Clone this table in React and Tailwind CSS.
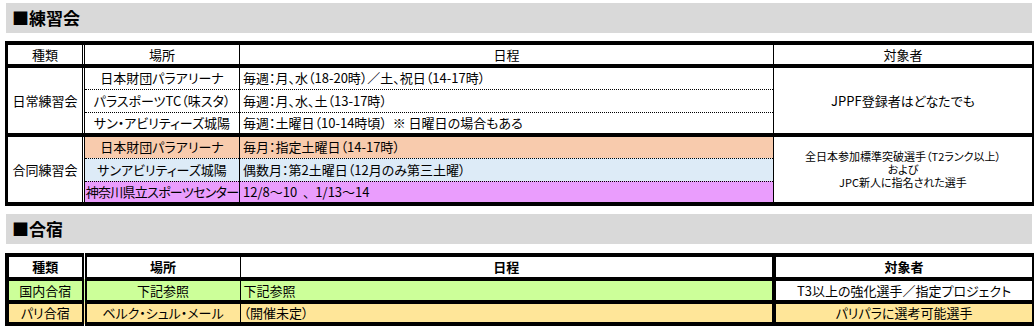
export default function App() {
  return (
    <div className="w-[1035px] h-[328px] bg-white pt-[3px] pl-[5px] text-black font-['Noto_Sans_CJK_JP',sans-serif] [font-feature-settings:'palt']">
      {/* 練習会 */}
      <div className="ml-[1px] w-[1026px] h-[30px] bg-[#d9d9d9] flex items-center pl-[6px] text-[17px] font-bold">■練習会</div>

      <table className="mt-[8px] w-[1029px] table-fixed border-collapse border-t-4 border-b-4 border-l-[3px] border-r-2 border-black text-[13px] leading-[16px]">
        <colgroup>
          <col className="w-[77px]" />
          <col className="w-[156px]" />
          <col className="w-[534px]" />
          <col />
        </colgroup>
        <thead>
          <tr className="h-[23px]">
            <th className="font-normal border-b-4 border-r-[3px] [border-right-style:double] border-black">種類</th>
            <th className="font-normal border-b-4 border-r border-black">場所</th>
            <th className="font-normal border-b-4 border-r border-black">日程</th>
            <th className="font-normal border-b-4 border-black">対象者</th>
          </tr>
        </thead>
        <tbody>
          <tr className="h-[23px]">
            <td rowSpan={3} className="text-center border-r-[3px] [border-right-style:double] border-black">日常練習会</td>
            <td className="text-center border-r border-b border-black [border-bottom-style:dotted]">日本財団パラアリーナ</td>
            <td className="pl-[3px] border-r border-b border-black [border-bottom-style:dotted]">毎週：月、水（18-20時）／土、祝日（14-17時）</td>
            <td rowSpan={3} className="text-center">JPPF登録者はどなたでも</td>
          </tr>
          <tr className="h-[23px]">
            <td className="text-center border-r border-b border-black [border-bottom-style:dotted]">パラスポーツTC（味スタ）</td>
            <td className="pl-[3px] border-r border-b border-black [border-bottom-style:dotted]">毎週：月、水、土（13-17時）</td>
          </tr>
          <tr className="h-[23px]">
            <td className="text-center border-r border-black">サン・アビリティーズ城陽</td>
            <td className="pl-[3px] border-r border-black whitespace-pre">毎週：土曜日（10-14時頃）  ※ 日曜日の場合もある</td>
          </tr>
          <tr className="h-[23px]">
            <td rowSpan={3} className="text-center border-t-4 border-r-[3px] [border-right-style:double] border-black">合同練習会</td>
            <td className="text-center bg-[#f8cbad] border-t-4 border-r border-b border-black [border-bottom-style:dotted]">日本財団パラアリーナ</td>
            <td className="pl-[3px] bg-[#f8cbad] border-t-4 border-r border-b border-black [border-bottom-style:dotted]">毎月：指定土曜日（14-17時）</td>
            <td rowSpan={3} className="text-center text-[11px] leading-[13px] border-t-4 border-black">
              <div>全日本参加標準突破選手（T2ランク以上）</div>
              <div>および</div>
              <div>JPC新人に指名された選手</div>
            </td>
          </tr>
          <tr className="h-[23px]">
            <td className="text-center bg-[#ddebf7] border-r border-b border-black [border-bottom-style:dotted]">サンアビリティーズ城陽</td>
            <td className="pl-[3px] bg-[#ddebf7] border-r border-b border-black [border-bottom-style:dotted]">偶数月：第2土曜日（12月のみ第三土曜）</td>
          </tr>
          <tr className="h-[23px]">
            <td className="px-0 text-center tracking-[-0.7px] bg-[#ea9dfd] border-r border-black whitespace-nowrap">神奈川県立スポーツセンター</td>
            <td className="pl-[3px] bg-[#ea9dfd] border-r border-black whitespace-pre">12/8～10  、  1/13～14</td>
          </tr>
        </tbody>
      </table>

      {/* 合宿 */}
      <div className="mt-[8px] ml-[1px] w-[1026px] h-[30px] bg-[#d9d9d9] flex items-center pl-[6px] text-[17px] font-bold">■合宿</div>

      <table className="mt-[9px] w-[1029px] table-fixed border-collapse border-4 border-r-2 border-black text-[13px] leading-[16px]">
        <colgroup>
          <col className="w-[77px]" />
          <col className="w-[156px]" />
          <col className="w-[534px]" />
          <col />
        </colgroup>
        <thead>
          <tr className="h-[24px]">
            <th className="font-bold border-b-4 border-r-[5px] [border-right-style:double] border-black">種類</th>
            <th className="font-bold border-b-4 border-r border-black">場所</th>
            <th className="font-bold border-b-4 border-r-4 border-black">日程</th>
            <th className="font-bold border-b-4 border-black">対象者</th>
          </tr>
        </thead>
        <tbody>
          <tr className="h-[23px]">
            <td className="text-center bg-[#ccff99] border-b-4 border-r-[5px] [border-right-style:double] border-black">国内合宿</td>
            <td className="text-center bg-[#ccff99] border-b-4 border-r border-black">下記参照</td>
            <td className="pl-[3px] bg-[#ccff99] border-b-4 border-r-4 border-black">下記参照</td>
            <td className="text-center border-b-4 border-black">T3以上の強化選手／指定プロジェクト</td>
          </tr>
          <tr className="h-[22px]">
            <td className="text-center bg-[#ffe699] border-r-[5px] [border-right-style:double] border-black">パリ合宿</td>
            <td className="text-center bg-[#ffe699] border-r border-black">ベルク・シュル・メール</td>
            <td className="pl-[3px] bg-[#ffe699] border-r-4 border-black">（開催未定）</td>
            <td className="text-center bg-[#ffe699]">パリパラに選考可能選手</td>
          </tr>
        </tbody>
      </table>
    </div>
  )
}
